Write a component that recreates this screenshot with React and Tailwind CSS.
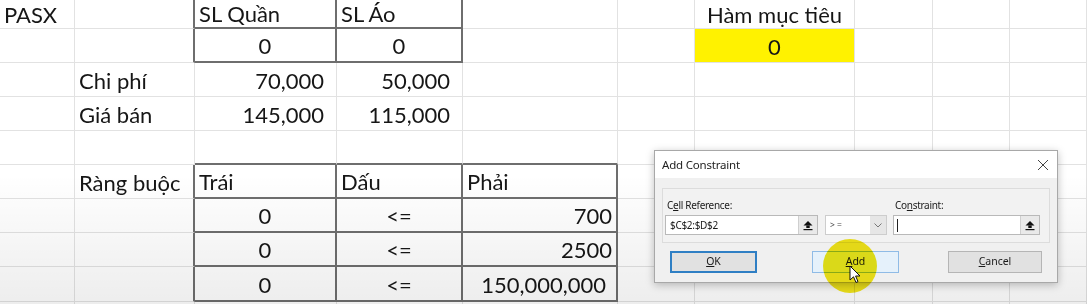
import React from "react";

const GR = "border-r border-r-[#e2e2e2]";
const DR = "border-r-2 border-r-[#6e6e6e]";
const GB = "border-b border-b-[#e2e2e2]";
const DB = "border-b-2 border-b-[#6e6e6e]";

const ALIGN = {
  l: "justify-start pl-[4px]",
  c: "justify-center",
  r: "justify-end pr-[12px]",
  r4: "justify-end pr-[4px]",
  r10: "justify-end pr-[10px]",
  n: "",
};

// each row: 10 cells [text, align, darkRight, darkBottom, yellow]
const e = () => ["", "n", false, false, false];

const rows = [
  [["PASX", "l"], ["", "n", true], ["SL Quần", "l", true, true], ["SL Áo", "l", true, true], e(), e(), ["Hàm mục tiêu", "c"], e(), e(), e()],
  [e(), ["", "n", true], ["0", "c", true, true], ["0", "c", true, true], e(), e(), ["0", "c", false, false, true], e(), e(), e()],
  [e(), ["Chi phí", "l"], ["70,000", "r"], ["50,000", "r"], e(), e(), e(), e(), e(), e()],
  [e(), ["Giá bán", "l"], ["145,000", "r"], ["115,000", "r"], e(), e(), e(), e(), e(), e()],
  [e(), e(), ["", "n", false, true], ["", "n", false, true], ["", "n", false, true], e(), e(), e(), e(), e()],
  [e(), ["Ràng buộc", "l", true], ["Trái", "l", true, true], ["Dấu", "l", true, true], ["Phải", "l", true, true], e(), e(), e(), e(), e()],
  [e(), ["", "n", true], ["0", "c", true, true], ["<=", "c", true, true], ["700", "r4", true, true], e(), e(), e(), e(), e()],
  [e(), ["", "n", true], ["0", "c", true, true], ["<=", "c", true, true], ["2500", "r4", true, true], e(), e(), e(), e(), e()],
  [e(), ["", "n", true], ["0", "c", true, true], ["<=", "c", true, true], ["150,000,000", "r10", true, true], e(), e(), e(), e(), e()],
  [e(), e(), e(), e(), e(), e(), e(), e(), e(), e()],
];

function RefIcon() {
  return (
    <svg width="10" height="11" viewBox="0 0 10 11">
      <polygon points="5,1 9.5,5.5 0.5,5.5" fill="#111" />
      <rect x="3.3" y="5.4" width="3.4" height="2.6" fill="#111" />
      <rect x="0.5" y="9" width="9" height="1.2" fill="#111" />
    </svg>
  );
}

function RefButton() {
  return (
    <div className="w-[19px] h-full flex items-center justify-center bg-[#e9e9e9] border-l border-[#cfcfcf]">
      <RefIcon />
    </div>
  );
}

export default function App() {
  return (
    <div
      className="relative w-[1087px] h-[304px] overflow-hidden bg-white text-[#161616]"
      style={{ fontFamily: "Lato, 'Noto Sans', sans-serif" }}
    >
      <div className="grid grid-cols-[75px_120px_142px_126px_155px_77px_160px_78px_77px_77px] grid-rows-[29px_34px_34px_34px_34px_34px_34px_34px_35px_10px] text-[22px] leading-[26px]">
        {rows.map((row, ri) =>
          row.map((c, ci) => {
            const [t, a, r, b, y] = c;
            return (
              <div
                key={ri + "-" + ci}
                className={`flex items-end whitespace-nowrap ${ri === 0 ? "pb-0" : "pb-[2px]"} ${r ? DR : GR} ${b ? DB : GB} ${ALIGN[a]} ${y ? "bg-[#fff200]" : ""}`}
              >
                {t}
              </div>
            );
          })
        )}
      </div>

      {/* video bottom shading */}
      <div className="pointer-events-none absolute inset-x-0 bottom-0 h-[130px] bg-linear-to-b from-transparent to-black/[0.07]" />

      {/* Add Constraint dialog */}
      <div
        className="absolute left-[654px] top-[150px] w-[404px] h-[133px] bg-[#f0f0f0] border border-[#a8a8a8] shadow-[0_2px_8px_rgba(0,0,0,0.25)] text-[#1a1a1a]"
        style={{ fontFamily: "'Noto Sans', 'Open Sans', sans-serif" }}
      >
        <div className="h-[27px] bg-white flex items-center justify-between pl-[7px] pr-[8px]">
          <span className="text-[11.5px] tracking-[-0.2px] text-[#222]">Add Constraint</span>
          <svg width="12" height="12" viewBox="0 0 12 12">
            <path d="M1 1 L11 11 M11 1 L1 11" stroke="#444" strokeWidth="1" />
          </svg>
        </div>

        <div className="mx-[7px] mt-[10px] h-[55px] border border-[#dcdcdc] bg-[#f2f2f2] px-[2px] pt-[7px]">
          <div className="flex text-[10px] tracking-[-0.3px] h-[18px] items-center">
            <div className="w-[160px] pl-[2px]">
              C<span className="underline">e</span>ll Reference:
            </div>
            <div className="w-[68px]" />
            <div className="pl-[2px]">
              Co<span className="underline">n</span>straint:
            </div>
          </div>
          <div className="flex h-[20px] mt-[1px] text-[10px]">
            <div className="w-[153px] h-full flex bg-white border border-[#b9b9b9]">
              <div className="flex-1 flex items-center pl-[4px] tracking-[-0.3px]">$C$2:$D$2</div>
              <RefButton />
            </div>
            <div className="ml-[7px] w-[62px] h-full flex bg-white border border-[#cdcdcd]">
              <div className="flex-1 flex items-center pl-[4px] text-[8.5px] text-[#444]">&gt; =</div>
              <div className="w-[16px] h-full bg-[#e6e6e6] flex items-center justify-center">
                <svg width="8" height="5" viewBox="0 0 8 5">
                  <path d="M0.5 0.5 L4 4 L7.5 0.5" stroke="#777" strokeWidth="1" fill="none" />
                </svg>
              </div>
            </div>
            <div className="ml-[6px] w-[147px] h-full flex bg-white border border-[#b9b9b9]">
              <div className="flex-1 flex items-center pl-[3px]">
                <div className="w-px h-[13px] bg-[#222]" />
              </div>
              <RefButton />
            </div>
          </div>
        </div>

        <div className="flex mt-[8px] text-[10.5px] h-[22px]">
          <div className="ml-[15px] w-[87px] h-full border-2 border-[#2f7fc4] bg-[#e1e1e1] flex items-center justify-center">
            <span className="underline">O</span>K
          </div>
          <div className="ml-[55px] w-[87px] h-full border border-[#8fbbe6] bg-[#e5f1fb] flex items-center justify-center">
            <span className="underline">A</span>dd
          </div>
          <div className="ml-[49px] w-[94px] h-full border border-[#b5b5b5] bg-[#e1e1e1] flex items-center justify-center">
            <span className="underline">C</span>ancel
          </div>
        </div>
      </div>

      {/* cursor highlight */}
      <div className="pointer-events-none absolute left-[823px] top-[239px] w-[54px] h-[54px] rounded-full bg-[#f2e400] mix-blend-multiply opacity-90" />
      <svg
        className="pointer-events-none absolute left-[849px] top-[265px]"
        width="12"
        height="19"
        viewBox="0 0 12 19"
      >
        <path
          d="M1 1 L1 15 L4.5 11.8 L7 17.5 L9 16.6 L6.6 11 L11 11 Z"
          fill="white"
          stroke="#111"
          strokeWidth="1"
          strokeLinejoin="round"
        />
      </svg>
    </div>
  );
}
